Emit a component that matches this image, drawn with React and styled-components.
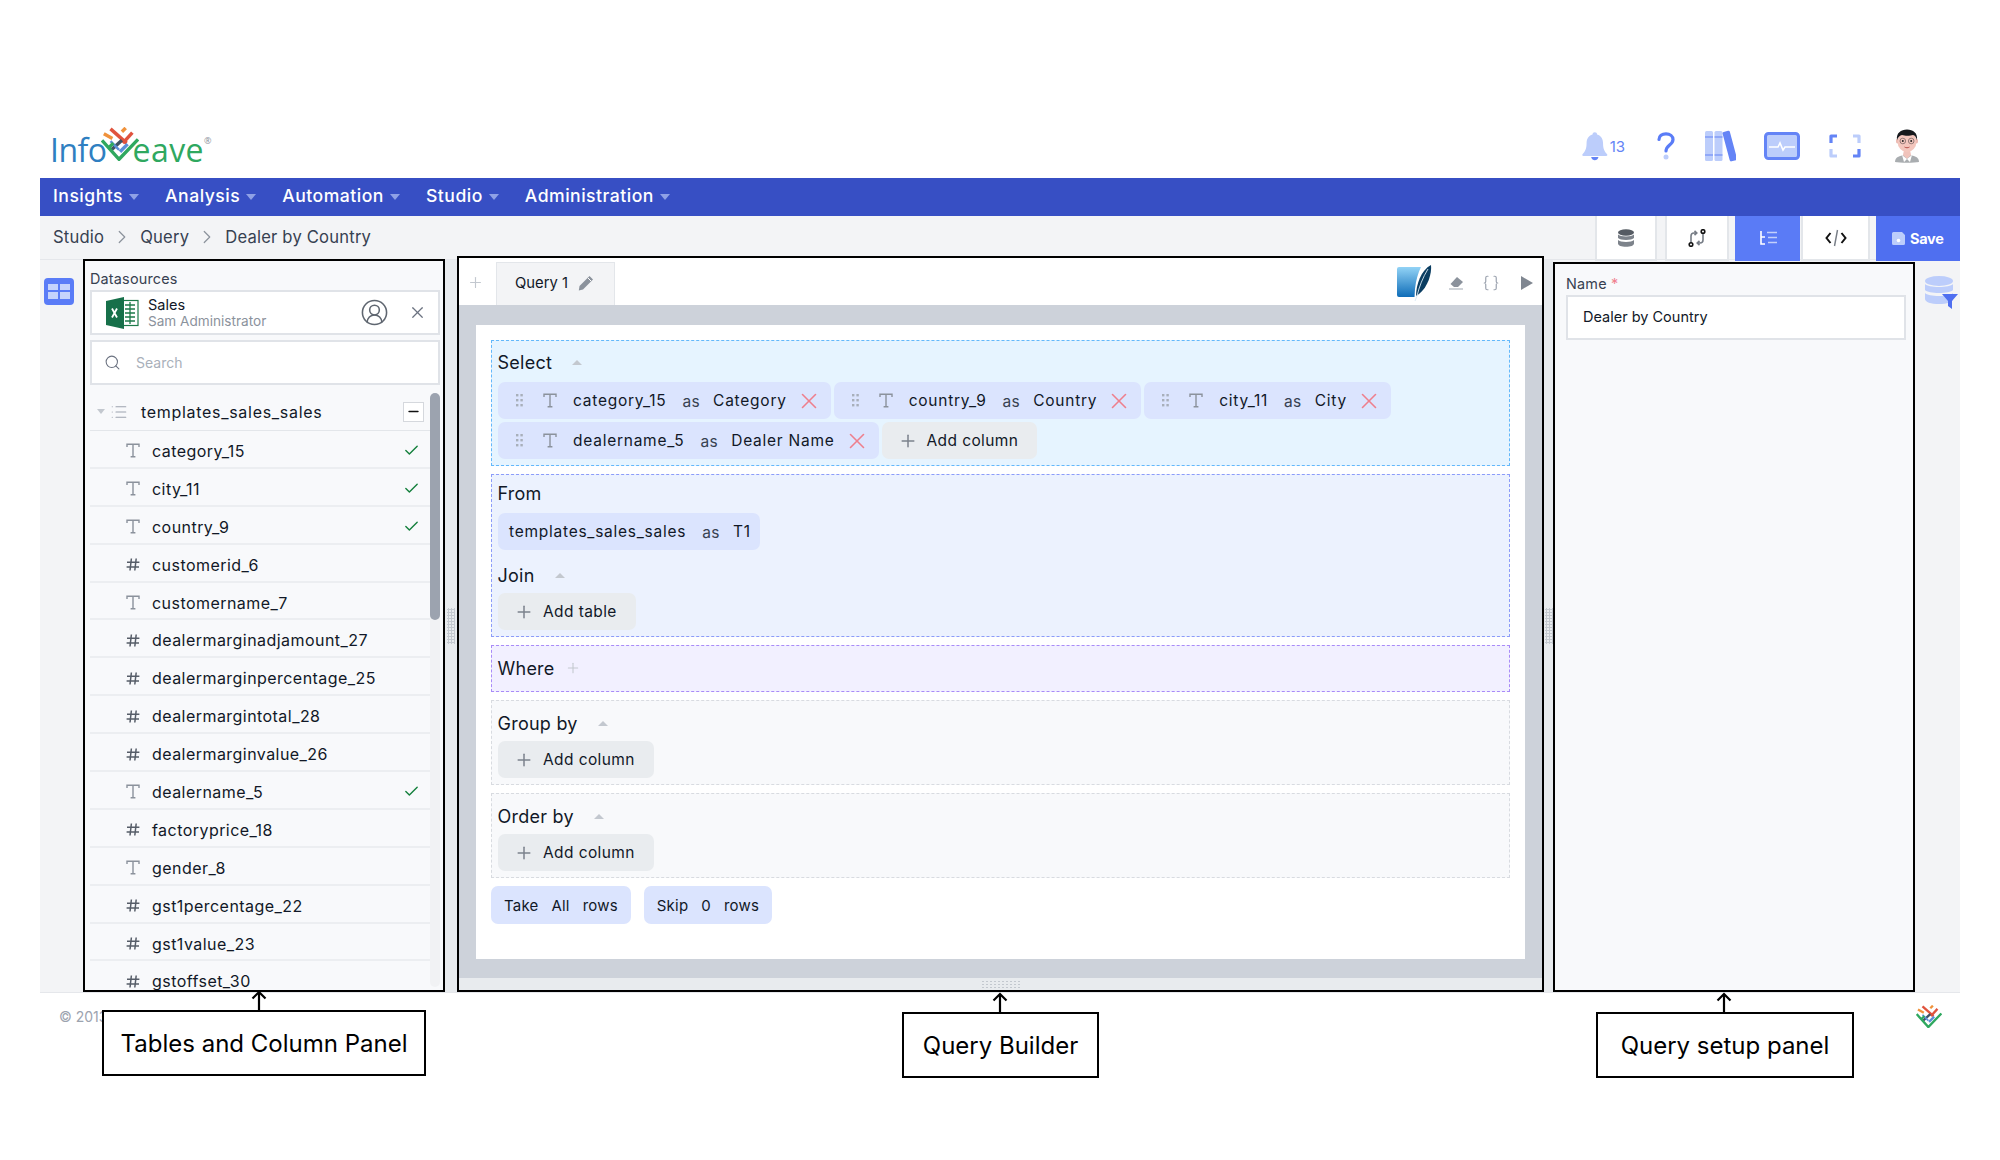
import React from "react";
import styled, { createGlobalStyle } from "styled-components";
import { Braces, Check, ChevronRight, CircleUserRound, List, Minus, Plus, Search, X } from "lucide-react";

const columns = [
    { name: "category_15", type: "text", used: true },
    { name: "city_11", type: "text", used: true },
    { name: "country_9", type: "text", used: true },
    { name: "customerid_6", type: "num" },
    { name: "customername_7", type: "text" },
    { name: "dealermarginadjamount_27", type: "num" },
    { name: "dealermarginpercentage_25", type: "num" },
    { name: "dealermargintotal_28", type: "num" },
    { name: "dealermarginvalue_26", type: "num" },
    { name: "dealername_5", type: "text", used: true },
    { name: "factoryprice_18", type: "num" },
    { name: "gender_8", type: "text" },
    { name: "gst1percentage_22", type: "num" },
    { name: "gst1value_23", type: "num" },
    { name: "gstoffset_30", type: "num" },
];

const selected = [
    { column: "category_15", alias: "Category" },
    { column: "country_9", alias: "Country" },
    { column: "city_11", alias: "City" },
    { column: "dealername_5", alias: "Dealer Name" },
];

const menu = ["Insights", "Analysis", "Automation", "Studio", "Administration"];

function WeaveMark({ size }) {
    return (
        <svg width={size} height={size * 0.9} viewBox="0 0 40 36" fill="none" strokeWidth="3.6">
            <path d="M3 7l9 5" stroke="#f0923b" />
            <path d="M22 5l4-4" stroke="#f0923b" />
            <path d="M10 2l17 15" stroke="#e0533d" />
            <path d="M33 6L23 17" stroke="#e0533d" />
            <path d="M22 14l-11 10" stroke="#3f5266" />
            <path d="M28 18l-8 8" stroke="#5b8fd9" />
            <path d="M10 15l9 9" stroke="#5b8fd9" strokeWidth="2.6" />
            <path d="M1 14l18 20L39 13" stroke="#2fa85f" />
            <path d="M8 22l5-5" stroke="#2fa85f" />
        </svg>
    );
}

function TextIcon() {
    return (
        <svg width="14" height="15" viewBox="0 0 14 15" fill="none" stroke="#8b929c" strokeWidth="1.4">
            <path d="M1 4V1.2h12V4M7 1.2v12.6M4.6 13.8h4.8" />
        </svg>
    );
}

function NumberIcon() {
    return (
        <svg width="14" height="15" viewBox="0 0 14 15" fill="none" stroke="#565d68" strokeWidth="1.5">
            <path d="M1 5.2h12.4M.6 10h12.4M5.4 1.5 4 13.5M10.2 1.5 8.8 13.5" />
        </svg>
    );
}

function DragDots() {
    return (
        <svg width="7" height="13" viewBox="0 0 7 13" fill="#a8afba">
            <rect x="0" y="0" width="2.4" height="2.4" /><rect x="4.4" y="0" width="2.4" height="2.4" />
            <rect x="0" y="5" width="2.4" height="2.4" /><rect x="4.4" y="5" width="2.4" height="2.4" />
            <rect x="0" y="10" width="2.4" height="2.4" /><rect x="4.4" y="10" width="2.4" height="2.4" />
        </svg>
    );
}

function HeaderIcons() {
    return (
        <HeaderTools>
            <BellGroup>
                <svg width="28" height="32" viewBox="0 0 28 32">
                    <path d="M14 1c1.5 0 2.4 1 2.5 2.4C21 4.600 23 8.400 23 13c0 6 1.600 9 4.500 12 .5 1 0 1.800-1 1.800h-25c-1 0-1.500-.8-1-1.800C3.400 22 5 19 5 13c0-4.600 2-8.400 6.500-9.600C11.600 2 12.500 1 14 1z" fill="#bccdfb" />
                    <path d="M10 28h8c-.6 2.400-2.200 3.600-4 3.600S10.600 30.400 10 28z" fill="#6484f6" />
                </svg>
                <BellCount>13</BellCount>
            </BellGroup>
            <HelpSlot>
                <svg width="18" height="28" viewBox="0 0 18 28" fill="none">
                    <path d="M2 7.500C2 4 5 1.800 9 1.800s7 2.400 7 5.700c0 5.500-7 5.500-7 11.500" stroke="#5a7cf7" strokeWidth="3.200" strokeLinecap="round" />
                    <circle cx="9" cy="25" r="2.500" fill="#bccdfb" />
                </svg>
            </HelpSlot>
            <BooksSlot>
                <svg width="31" height="32" viewBox="0 0 31 32">
                    <rect x="0" y="1" width="8" height="30" rx="1.500" fill="#bccdfb" />
                    <rect x="9.500" y="1" width="8" height="30" rx="1.500" fill="#bccdfb" />
                    <path d="M0 7h8M9.500 7h8M0 25h8M9.500 25h8" stroke="#6484f6" strokeWidth="1.200" />
                    <rect x="21" y="1" width="7.500" height="30.500" rx="1.500" transform="rotate(-15 24 16)" fill="#6484f6" />
                </svg>
            </BooksSlot>
            <MonitorSlot>
                <svg width="36" height="28" viewBox="0 0 36 28">
                    <rect x="1.500" y="1.500" width="33" height="25" rx="3" fill="#bccdfb" stroke="#6484f6" strokeWidth="3" />
                    <path d="M5 15h9l2-4 3 7 2-3h10" fill="none" stroke="#fff" strokeWidth="1.600" />
                </svg>
            </MonitorSlot>
            <ExpandSlot>
                <svg width="32" height="24" viewBox="0 0 32 24" fill="none" strokeWidth="3.200" strokeLinejoin="round">
                    <path d="M8 2H2v7" stroke="#6484f6" />
                    <path d="M24 2h6v7" stroke="#bccdfb" />
                    <path d="M2 15v7h6" stroke="#bccdfb" />
                    <path d="M30 15v7h-6" stroke="#6484f6" />
                </svg>
            </ExpandSlot>
            <AvatarSlot>
                <svg width="26" height="34" viewBox="0 0 26 34">
                    <path d="M1 33c0-5 5-7 12-7s12 2 12 7c-4 1-20 1-24 0z" fill="#a9adb0" />
                    <path d="M9 26l4 4 4-4-1-5h-6z" fill="#f0c3bb" />
                    <path d="M8 26l5 4-3 3zM18 26l-5 4 3 3z" fill="#fff" />
                    <ellipse cx="3.500" cy="12" rx="1.500" ry="2.500" fill="#e9b5ac" />
                    <ellipse cx="22.500" cy="12" rx="1.500" ry="2.500" fill="#e9b5ac" />
                    <ellipse cx="13" cy="12.500" rx="9.500" ry="10.500" fill="#f3c6bd" />
                    <path d="M3 11C2 4 7 .5 13 .5S24 4 23 11c-1-3-2-4.500-4-5-3 1-8 1-11 0-2 .5-4 2-5 5z" fill="#15181c" />
                    <circle cx="8.800" cy="12" r="2.800" fill="none" stroke="#6b5a5a" strokeWidth=".7" />
                    <circle cx="17.200" cy="12" r="2.800" fill="none" stroke="#6b5a5a" strokeWidth=".7" />
                    <circle cx="8.800" cy="12" r="1" fill="#222" /><circle cx="17.200" cy="12" r="1" fill="#222" />
                    <path d="M10.500 18c1.500 1 3.500 1 5 0" stroke="#b0453f" strokeWidth=".9" fill="none" />
                </svg>
            </AvatarSlot>
        </HeaderTools>
    );
}

function ChipColumn({ column, alias }) {
    return (
        <Chip>
            <DragDots />
            <ChipIcon><TextIcon /></ChipIcon>
            <ChipText>{column}</ChipText>
            <ChipAs>as</ChipAs>
            <ChipText>{alias}</ChipText>
            <RemoveIcon size={26} strokeWidth={1.5} />
        </Chip>
    );
}

function AddButton({ children }) {
    return (
        <Add>
            <Plus size={20} strokeWidth={1.8} color="#7b828d" />
            {children}
        </Add>
    );
}

function Callout({ title, left, top, width, arrow }) {
    return (
        <CalloutBox style={{ left, top, width }}>
            <CalloutArrow style={{ left: arrow }} width="16" height="22" viewBox="0 0 16 22" fill="none" stroke="#000" strokeWidth="2.200">
                <path d="M8 22V2M1.500 8.500 8 2l6.500 6.500" />
            </CalloutArrow>
            {title}
        </CalloutBox>
    );
}

function App() {
    return (
        <Page>
            <GlobalStyle />
            <Shell>
                <Header>
                    <Logo>
                        <LogoInfo>Info</LogoInfo>
                        <LogoMark><WeaveMark size={38} /></LogoMark>
                        <LogoEave>eave</LogoEave>
                        <LogoReg>®</LogoReg>
                    </Logo>
                    <HeaderIcons />
                </Header>

                <Nav>
                    {menu.map(item => (
                        <NavItem key={item}>{item}<NavCaret /></NavItem>
                    ))}
                </Nav>

                <Workspace>
                    <Crumbs>
                        <CrumbPath>
                            <span>Studio</span>
                            <ChevronRight size={22} strokeWidth={1.3} color="#8b929c" />
                            <span>Query</span>
                            <ChevronRight size={22} strokeWidth={1.3} color="#8b929c" />
                            <span>Dealer by Country</span>
                        </CrumbPath>
                        <Tools>
                            <ToolButton $width={62} $mr={8}>
                                <svg width="16" height="18" viewBox="0 0 16 18">
                                    <ellipse cx="8" cy="3.500" rx="8" ry="3.300" fill="#555b63" />
                                    <path d="M0 5.500c2 2.600 14 2.600 16 0v3.500c-2 2.600-14 2.600-16 0zM0 11c2 2.600 14 2.600 16 0v3.500c0 2-3.500 3.300-8 3.300s-8-1.300-8-3.300z" fill="#7d838b" />
                                </svg>
                            </ToolButton>
                            <ToolButton $width={64} $mr={6}>
                                <svg width="18" height="18" viewBox="0 0 18 18" fill="none" strokeWidth="1.600">
                                    <path d="M3 14V7c0-2 1-3 3-3h2M6.500 1.800 8.800 4 6.500 6.200" stroke="#777d86" />
                                    <path d="M15 4v7c0 2-1 3-3 3h-2M11.500 11.800 9.200 14l2.300 2.200" stroke="#777d86" />
                                    <circle cx="15" cy="2.500" r="1.800" fill="#fff" stroke="#111" />
                                    <circle cx="3" cy="15.500" r="1.800" fill="#fff" stroke="#111" />
                                </svg>
                            </ToolButton>
                            <ToolButton $width={65} $mr={1} $active>
                                <svg width="18" height="16" viewBox="0 0 18 16" fill="none" stroke="#fff" strokeWidth="1.600">
                                    <path d="M2 1v13h4M2 7h4" />
                                    <path d="M8 2.500h10M9 7.500h9M9 12.500h9" stroke="#c3d0fb" />
                                </svg>
                            </ToolButton>
                            <ToolButton $width={69} $mr={6}>
                                <svg width="22" height="18" viewBox="0 0 22 18" fill="none" strokeWidth="2">
                                    <path d="M5.500 4 1.500 9l4 5M16.500 4l4 5-4 5" stroke="#111" />
                                    <path d="M12.500 1 9.500 17" stroke="#777d86" strokeWidth="1.400" />
                                </svg>
                            </ToolButton>
                            <SaveButton>
                                <svg width="13" height="13" viewBox="0 0 13 13">
                                    <path d="M1.500 0H10l3 3v8.500a1.500 1.500 0 0 1-1.500 1.500h-10A1.500 1.500 0 0 1 0 11.500v-10A1.500 1.500 0 0 1 1.500 0z" fill="#bccdfb" />
                                    <circle cx="6.500" cy="8.500" r="1.800" fill="#fff" />
                                </svg>
                                Save
                            </SaveButton>
                        </Tools>
                    </Crumbs>

                    <Panels>
                        <LeftRail>
                            <svg width="30" height="27" viewBox="0 0 30 27">
                                <rect width="30" height="27" rx="4" fill="#5a7cf7" />
                                <path d="M4 6h10v6H4zM16 6h10v6H16zM4 14h10v7H4zM16 14h10v7H16z" fill="#c5d3fc" />
                            </svg>
                        </LeftRail>

                        <ColumnPanel>
                            <SmallLabel>Datasources</SmallLabel>
                            <SourceCard>
                                <svg width="34" height="32" viewBox="0 0 34 32">
                                    <rect x="14" y="3.500" width="19" height="25" fill="#fff" stroke="#1d7a4a" strokeWidth="1.200" />
                                    <path d="M20 8h10M20 12h10M20 16h10M20 20h10M20 24h10M25 5v22" stroke="#1d7a4a" strokeWidth="1.300" />
                                    <path d="M1 4 19 0v32L1 28z" fill="#17704a" />
                                    <path d="M7 11.500l5 9M12 11.500l-5 9" stroke="#fff" strokeWidth="1.800" />
                                </svg>
                                <SourceText>
                                    <SourceName>Sales</SourceName>
                                    <SourceOwner>Sam Administrator</SourceOwner>
                                </SourceText>
                                <CircleUserRound size={29} strokeWidth={1.3} color="#5f6670" />
                                <SourceClose size={19} strokeWidth={1.5} color="#6b7280" />
                            </SourceCard>
                            <SearchBox>
                                <Search size={17} strokeWidth={1.5} color="#6b7280" />
                                <SearchHint>Search</SearchHint>
                            </SearchBox>
                            <TreeWrap>
                                <Tree>
                                    <TreeHead>
                                        <TreeCaret />
                                        <List size={18} strokeWidth={1.5} color="#9ca3af" />
                                        <TreeTitle>templates_sales_sales</TreeTitle>
                                        <Collapse><Minus size={15} strokeWidth={2.6} color="#111" /></Collapse>
                                    </TreeHead>
                                    {columns.map(col => (
                                        <ColumnRow key={col.name}>
                                            {col.type === "text" ? <TextIcon /> : <NumberIcon />}
                                            <ColumnName>{col.name}</ColumnName>
                                            {col.used && <Check size={17} strokeWidth={2} color="#15803d" />}
                                        </ColumnRow>
                                    ))}
                                </Tree>
                                <ScrollTrack><ScrollThumb /></ScrollTrack>
                            </TreeWrap>
                        </ColumnPanel>

                        <Splitter $width={12}><Grip /></Splitter>

                        <BuilderPanel>
                            <TabBar>
                                <TabPlus><Plus size={17} strokeWidth={1.6} color="#c3c8cf" /></TabPlus>
                                <Tab>
                                    Query 1
                                    <svg width="16" height="16" viewBox="0 0 16 16">
                                        <path d="M11.500 1 15 4.500 5 14.500 0.800 15.500 1.500 11z" fill="#8b929c" />
                                        <path d="M10 3l3 3" stroke="#fff" strokeWidth="1" />
                                    </svg>
                                </Tab>
                                <TabTools>
                                    <svg width="35" height="36" viewBox="0 0 35 36">
                                        <defs>
                                            <linearGradient id="sqliteBlue" x1="0" y1="0" x2="0" y2="1">
                                                <stop offset="0" stopColor="#92d3f6" />
                                                <stop offset="1" stopColor="#0f6db8" />
                                            </linearGradient>
                                        </defs>
                                        <path d="M2 2h22c-3 6-5 13-6 22l-.5 8H2a2 2 0 0 1-2-2V4a2 2 0 0 1 2-2z" fill="url(#sqliteBlue)" />
                                        <path d="M34 0c1 8-3 22-12 29l-3 2c0-11 5-26 15-31z" fill="#0a3d61" />
                                        <path d="M31 4C26 12 22 22 20 31l-2 5" stroke="#d7e9f4" strokeWidth=".9" fill="none" />
                                    </svg>
                                    <EraseSlot>
                                        <svg width="16" height="13" viewBox="0 0 16 13" fill="none">
                                            <path d="M9 0l6 5-5 5H6L2.500 7z" fill="#8b929c" />
                                            <path d="M1 12h14" stroke="#c3c8cf" strokeWidth="1.600" />
                                        </svg>
                                    </EraseSlot>
                                    <BraceSlot><Braces size={18} strokeWidth={1.6} color="#9ca3af" /></BraceSlot>
                                    <svg width="12" height="14" viewBox="0 0 12 14"><path d="M0 0l12 7-12 7z" fill="#808791" /></svg>
                                </TabTools>
                            </TabBar>

                            <Canvas>
                                <Card>
                                    <Section $bg="#e6f4ff" $line="#63b8fb" $top={5} $bottom={6}>
                                        <SectionTitle>Select <TitleCaret /></SectionTitle>
                                        <ChipWrap>
                                            {selected.map(item => <ChipColumn key={item.column} {...item} />)}
                                            <AddButton>Add column</AddButton>
                                        </ChipWrap>
                                    </Section>

                                    <Section $bg="#ecf2fe" $line="#8c9cf9" $top={2} $bottom={6}>
                                        <SectionTitle>From</SectionTitle>
                                        <TableChip>
                                            <ChipText>templates_sales_sales</ChipText>
                                            <ChipAs>as</ChipAs>
                                            <ChipText>T1</ChipText>
                                        </TableChip>
                                        <SectionTitle $mt={9} $mb={2}>Join <TitleCaret /></SectionTitle>
                                        <AddButton>Add table</AddButton>
                                    </Section>

                                    <Section $bg="#f2f0ff" $line="#a98bf8" $top={6} $bottom={7}>
                                        <SectionTitle $mb={0}>Where <WherePlus size={16} strokeWidth={1.6} color="#c3c8cf" /></SectionTitle>
                                    </Section>

                                    <Section $bg="#f8f9fb" $line="#d8dbe0" $top={6} $bottom={6}>
                                        <SectionTitle $mb={2}>Group by <TitleCaret /></SectionTitle>
                                        <AddButton>Add column</AddButton>
                                    </Section>

                                    <Section $bg="#f8f9fb" $line="#d8dbe0" $top={6} $bottom={6}>
                                        <SectionTitle $mb={2}>Order by <TitleCaret /></SectionTitle>
                                        <AddButton>Add column</AddButton>
                                    </Section>

                                    <LimitRow>
                                        <Limit><span>Take</span><span>All</span><span>rows</span></Limit>
                                        <Limit><span>Skip</span><span>0</span><span>rows</span></Limit>
                                    </LimitRow>
                                </Card>
                            </Canvas>
                            <BottomStrip><WideGrip /></BottomStrip>
                        </BuilderPanel>

                        <Splitter $width={9}><Grip /></Splitter>

                        <SetupPanel>
                            <SmallLabel>Name <Required>*</Required></SmallLabel>
                            <NameInput>Dealer by Country</NameInput>
                        </SetupPanel>

                        <RightRail>
                            <svg width="33" height="33" viewBox="0 0 33 33">
                                <ellipse cx="14" cy="5" rx="14" ry="5" fill="#bccdfb" />
                                <path d="M0 8c3 4 25 4 28 0v6c-3 4-25 4-28 0zM0 17c3 4 25 4 28 0v6c0 3-6 5-14 5S0 26 0 23z" fill="#bccdfb" />
                                <path d="M17 18h16l-6 7v8l-4-3v-5z" fill="#4f6ff0" />
                            </svg>
                        </RightRail>
                    </Panels>
                </Workspace>

                <Footer>
                    <Copyright>© 2013</Copyright>
                    <WeaveMark size={26} />
                </Footer>
            </Shell>

            <Callout title="Tables and Column Panel" left={102} top={1010} width={324} arrow={155} />
            <Callout title="Query Builder" left={902} top={1012} width={197} arrow={96} />
            <Callout title="Query setup panel" left={1596} top={1012} width={258} arrow={126} />
        </Page>
    );
}

export default App;

const GlobalStyle = createGlobalStyle`
    html, body {
        margin: 0;
        background: #fff;
    }
    * {
        box-sizing: border-box;
    }
`;

const Page = styled.div`
    position: relative;
    width: 2000px;
    height: 1160px;
    overflow: hidden;
    padding-left: 40px;
    font-family: Inter, "Open Sans", sans-serif;
    color: #111827;
`;

const Shell = styled.div`
    width: 1920px;
`;

const Header = styled.header`
    height: 178px;
    display: flex;
    align-items: flex-start;
    justify-content: space-between;
    padding: 127px 40px 0 10px;
`;

const Logo = styled.div`
    display: flex;
    align-items: flex-start;
    font-family: "Open Sans", sans-serif;
    font-size: 32px;
    font-weight: 500;
    line-height: 40px;
`;

const LogoInfo = styled.span`
    color: #2f7fc1;
    margin-top: 3px;
    letter-spacing: -0.5px;
`;

const LogoMark = styled.span`
    margin-left: -6px;
    margin-right: -6px;
    line-height: 0;
`;

const LogoEave = styled.span`
    color: #2fa85f;
    margin-top: 3px;
    letter-spacing: 0.4px;
`;

const LogoReg = styled.span`
    color: #8b929c;
    font-size: 9px;
    line-height: 12px;
    margin-top: 8px;
`;

const HeaderTools = styled.div`
    display: flex;
    align-items: flex-start;
`;

const BellGroup = styled.div`
    display: flex;
    align-items: center;
    gap: 2px;
    margin-top: 3px;
    margin-right: 32px;
    width: 43px;
`;

const BellCount = styled.span`
    font-size: 15px;
    color: #6484f6;
`;

const HelpSlot = styled.div`
    margin-top: 5px;
    margin-right: 30px;
    line-height: 0;
`;

const BooksSlot = styled.div`
    margin-top: 3px;
    margin-right: 28px;
    line-height: 0;
`;

const MonitorSlot = styled.div`
    margin-top: 5px;
    margin-right: 29px;
    line-height: 0;
`;

const ExpandSlot = styled.div`
    margin-top: 7px;
    margin-right: 33px;
    line-height: 0;
`;

const AvatarSlot = styled.div`
    margin-top: 2px;
    line-height: 0;
`;

const Nav = styled.nav`
    height: 38px;
    background: #374fc4;
    display: flex;
    align-items: center;
    gap: 26px;
    padding: 0 0 3px 13px;
`;

const NavItem = styled.div`
    display: flex;
    align-items: center;
    gap: 6px;
    color: #fff;
    font-size: 17.6px;
    font-weight: 500;
    letter-spacing: 0.5px;
`;

const NavCaret = styled.span`
    width: 0;
    height: 0;
    margin-top: 3px;
    border-left: 5.500px solid transparent;
    border-right: 5.500px solid transparent;
    border-top: 6px solid #8fa1e6;
`;

const Workspace = styled.div`
    background: #f3f4f6;
`;

const Crumbs = styled.div`
    height: 44px;
    display: flex;
    justify-content: space-between;
    padding-left: 13px;
    border-bottom: 1px solid #e5e7eb;
`;

const CrumbPath = styled.div`
    display: flex;
    align-items: center;
    gap: 7px;
    padding-bottom: 2px;
    font-size: 16.600px;
    letter-spacing: 0.2px;
    color: #374151;
`;

const Tools = styled.div`
    display: flex;
    height: 45px;
`;

const ToolButton = styled.div`
    width: ${props => props.$width}px;
    margin-right: ${props => props.$mr}px;
    display: flex;
    align-items: center;
    justify-content: center;
    background: ${props => props.$active ? "#5a7bf6" : "#fff"};
    border: 2px solid ${props => props.$active ? "#5a7bf6" : "#e3e6ea"};
    border-top: none;
`;

const SaveButton = styled.div`
    width: 84px;
    display: flex;
    align-items: center;
    gap: 5px;
    padding-left: 16px;
    background: #4f6ff0;
    color: #fff;
    font-size: 14.500px;
    font-weight: 700;
    letter-spacing: -0.3px;
`;

const Panels = styled.div`
    height: 737px;
    margin-top: -4px;
    display: flex;
    position: relative;
    border-bottom: 1px solid #e5e7eb;
`;

const LeftRail = styled.div`
    width: 43px;
    padding: 22px 0 0 4px;
`;

const RightRail = styled.div`
    width: 45px;
    padding: 20px 0 0 10px;
`;

const ColumnPanel = styled.section`
    width: 362px;
    margin-top: 3px;
    padding: 9px 3px 0 5px;
    background: #f8f9fb;
    border: 2px solid #000;
    display: flex;
    flex-direction: column;
    overflow: hidden;
`;

const SmallLabel = styled.div`
    font-size: 14.400px;
    line-height: 18px;
    height: 20px;
    letter-spacing: 0.2px;
    color: #374151;
`;

const SourceCard = styled.div`
    height: 45px;
    flex: none;
    display: flex;
    align-items: center;
    padding: 0 11px 0 13px;
    background: #fff;
    border: 2px solid #e0e3e8;
`;

const SourceText = styled.div`
    flex: 1;
    margin-left: 9px;
`;

const SourceName = styled.div`
    font-size: 14.500px;
    line-height: 16px;
`;

const SourceOwner = styled.div`
    font-size: 13.600px;
    line-height: 16px;
    color: #8b929c;
`;

const SourceClose = styled(X)`
    margin-left: 19px;
`;

const SearchBox = styled.div`
    height: 45px;
    flex: none;
    margin: 5px 0 8px;
    display: flex;
    align-items: center;
    gap: 15px;
    padding-left: 12px;
    background: #fff;
    border: 2px solid #e0e3e8;
`;

const SearchHint = styled.span`
    font-size: 14px;
    color: #a9b0ba;
`;

const TreeWrap = styled.div`
    flex: 1;
    display: flex;
    min-height: 0;
`;

const Tree = styled.div`
    width: 340px;
    flex: none;
`;

const TreeHead = styled.div`
    height: 38px;
    display: flex;
    align-items: center;
    padding: 0 6px 0 7px;
    border-bottom: 1px solid #e3e6ea;
`;

const TreeCaret = styled.span`
    width: 0;
    height: 0;
    margin-right: 5px;
    border-left: 4.500px solid transparent;
    border-right: 4.500px solid transparent;
    border-top: 5px solid #c3c8cf;
`;

const TreeTitle = styled.span`
    flex: 1;
    margin-left: 13px;
    font-size: 16px;
    letter-spacing: 0.7px;
`;

const Collapse = styled.span`
    width: 21px;
    height: 20px;
    display: flex;
    align-items: center;
    justify-content: center;
    background: #fff;
    border: 1px solid #d5d8dd;
`;

const ColumnRow = styled.div`
    height: 37.900px;
    display: flex;
    align-items: center;
    padding: 4px 10px 0 36px;
    border-bottom: 2px solid #eceef1;
`;

const ColumnName = styled.span`
    flex: 1;
    margin-left: 12px;
    font-size: 16px;
    letter-spacing: 0.45px;
`;

const ScrollTrack = styled.div`
    width: 10px;
    height: 594px;
    background: #f1f2f4;
    border-radius: 5px;
`;

const ScrollThumb = styled.div`
    height: 227px;
    background: #9ca3af;
    border-radius: 5px;
`;

const Splitter = styled.div`
    width: ${props => props.$width}px;
    margin-top: 4px;
    background: #e8ebee;
    display: flex;
    align-items: center;
    justify-content: center;
`;

const Grip = styled.div`
    width: 8px;
    height: 36px;
    background-image: radial-gradient(#c3c8cf 1px, transparent 1.200px);
    background-size: 3px 3px;
`;

const WideGrip = styled.div`
    width: 40px;
    height: 8px;
    background-image: radial-gradient(#c3c8cf 1px, transparent 1.200px);
    background-size: 4px 3px;
`;

const BuilderPanel = styled.section`
    width: 1087px;
    border: 2px solid #000;
    display: flex;
    flex-direction: column;
    background: #fff;
`;

const TabBar = styled.div`
    height: 47px;
    flex: none;
    display: flex;
    align-items: flex-end;
`;

const TabPlus = styled.div`
    width: 37px;
    height: 43px;
    padding: 0 4px 2px 0;
    display: flex;
    align-items: center;
    justify-content: center;
`;

const Tab = styled.div`
    width: 119px;
    height: 43px;
    display: flex;
    align-items: center;
    gap: 10px;
    padding: 0 0 2px 18px;
    font-size: 14.800px;
    background: #f3f4f6;
    border: 1px solid #e3e6ea;
    border-bottom: none;
`;

const TabTools = styled.div`
    margin-left: auto;
    height: 47px;
    display: flex;
    align-items: center;
    padding: 3px 9px 0 0;
`;

const EraseSlot = styled.div`
    margin: 0 18px 0 16px;
    line-height: 0;
`;

const BraceSlot = styled.div`
    margin-right: 21px;
    line-height: 0;
`;

const Canvas = styled.div`
    flex: 1;
    padding: 20px 17px 19px;
    background: #cdd2da;
`;

const Card = styled.div`
    height: 634px;
    padding: 15px;
    background: #fff;
    display: flex;
    flex-direction: column;
    gap: 8px;
`;

const Section = styled.div`
    padding: ${props => props.$top}px 6px ${props => props.$bottom}px;
    background: ${props => props.$bg};
    border: 1.500px dashed ${props => props.$line};
`;

const SectionTitle = styled.div`
    height: 32px;
    margin-top: ${props => props.$mt || 0}px;
    margin-bottom: ${props => props.$mb ?? 4}px;
    margin-left: -0.5px;
    display: flex;
    align-items: center;
    gap: 20px;
    font-size: 18px;
    letter-spacing: 0.25px;
`;

const TitleCaret = styled.span`
    width: 0;
    height: 0;
    border-left: 5px solid transparent;
    border-right: 5px solid transparent;
    border-bottom: 5px solid #c3c8cf;
`;

const WherePlus = styled(Plus)`
    margin-left: -10px;
`;

const ChipWrap = styled.div`
    display: flex;
    flex-wrap: wrap;
    gap: 3px;
`;

const Chip = styled.div`
    height: 37px;
    display: flex;
    align-items: center;
    padding: 0 9px 0 18px;
    background: #dbe4fe;
    border-radius: 7px;
`;

const ChipIcon = styled.span`
    margin: 0 16px 0 20px;
    line-height: 0;
`;

const ChipText = styled.span`
    font-size: 15.500px;
    letter-spacing: 0.75px;
`;

const ChipAs = styled.span`
    margin: 2px 13px 0 16px;
    font-size: 15.500px;
    letter-spacing: 0.4px;
    color: #374151;
`;

const RemoveIcon = styled(X)`
    color: #ee7f8d;
    margin-left: 9px;
`;

const TableChip = styled(Chip)`
    width: 262px;
    padding: 0 11px;
`;

const Add = styled.div`
    height: 37px;
    width: fit-content;
    display: flex;
    align-items: center;
    gap: 9px;
    padding: 0 19px 0 16px;
    background: #e9ecef;
    border-radius: 7px;
    font-size: 15.500px;
    letter-spacing: 0.4px;
`;

const LimitRow = styled.div`
    display: flex;
    gap: 13px;
`;

const Limit = styled.div`
    height: 38px;
    display: flex;
    align-items: center;
    gap: 13px;
    padding: 0 13px;
    background: #dbe4fe;
    border-radius: 7px;
    font-size: 15px;
    letter-spacing: 0.2px;
`;

const BottomStrip = styled.div`
    height: 12px;
    flex: none;
    background: #e8ebee;
    display: flex;
    align-items: center;
    justify-content: center;
`;

const SetupPanel = styled.section`
    width: 362px;
    margin-top: 6px;
    padding: 11px 7px 0 11px;
    background: #f8f9fb;
    border: 2px solid #000;
`;

const Required = styled.span`
    color: #f0808e;
`;

const NameInput = styled.div`
    height: 45px;
    display: flex;
    align-items: center;
    padding: 0 0 2px 15px;
    background: #fff;
    border: 2px solid #e0e3e8;
    font-size: 14.500px;
`;

const Footer = styled.footer`
    height: 60px;
    display: flex;
    justify-content: space-between;
    padding: 12px 18px 0 19px;
`;

const Copyright = styled.span`
    font-size: 14px;
    line-height: 24px;
    color: #9ca3af;
`;

const CalloutBox = styled.div`
    position: absolute;
    height: 66px;
    display: flex;
    align-items: center;
    justify-content: center;
    background: #fff;
    border: 2px solid #000;
    font-size: 24px;
    color: #000;
`;

const CalloutArrow = styled.svg`
    position: absolute;
    top: -22px;
    margin-left: -8px;
`;
